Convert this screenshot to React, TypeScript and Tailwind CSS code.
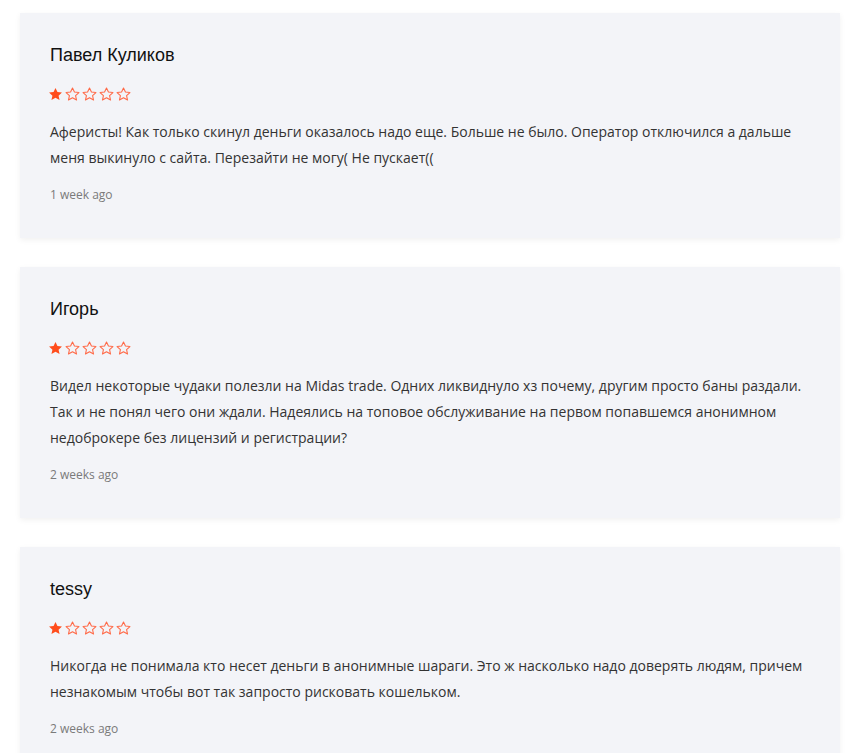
import React from "react";

type Review = {
  name: string;
  rating: number;
  text: string;
  date: string;
};

const reviews: Review[] = [
  {
    name: "Павел Куликов",
    rating: 1,
    text: "Аферисты! Как только скинул деньги оказалось надо еще. Больше не было. Оператор отключился а дальше меня выкинуло с сайта. Перезайти не могу( Не пускает((",
    date: "1 week ago",
  },
  {
    name: "Игорь",
    rating: 1,
    text: "Видел некоторые чудаки полезли на Midas trade. Одних ликвиднуло хз почему, другим просто баны раздали. Так и не понял чего они ждали. Надеялись на топовое обслуживание на первом попавшемся анонимном недоброкере без лицензий и регистрации?",
    date: "2 weeks ago",
  },
  {
    name: "tessy",
    rating: 1,
    text: "Никогда не понимала кто несет деньги в анонимные шараги. Это ж насколько надо доверять людям, причем незнакомым чтобы вот так запросто рисковать кошельком.",
    date: "2 weeks ago",
  },
];

const STAR =
  "M12 1.5l3.1 6.6 7.2.8-5.4 4.9 1.6 7.1L12 17.2l-6.5 3.7 1.6-7.1-5.4-4.9 7.2-.8z";

const Star = ({ filled }: { filled: boolean }) => (
  <svg width="15" height="15" viewBox="0 0 24 24">
    {filled ? (
      <path d={STAR} fill="#ff4d1c" />
    ) : (
      <path d={STAR} fill="none" stroke="#ff6a48" strokeWidth="1.7" strokeLinejoin="round" />
    )}
  </svg>
);

const ReviewCard = ({ review }: { review: Review }) => (
  <div className="bg-[#f3f4f8] shadow-[0_2px_6px_rgba(0,0,0,0.06)] px-[30px] pt-[30px] pb-[34px]">
    <div className="text-[18px] leading-[24px] text-[#111] font-['Liberation_Sans',Arial,sans-serif]">
      {review.name}
    </div>
    <div className="mt-5 -ml-[2px] flex h-[14px] items-center gap-[2px]">
      {[1, 2, 3, 4, 5].map((i) => (
        <Star key={i} filled={i <= review.rating} />
      ))}
    </div>
    <p className="mt-[18px] text-[14px] leading-[26px] text-[#333]">{review.text}</p>
    <div className="mt-[15px] text-[12px] leading-[18px] text-[#7a7a7a]">{review.date}</div>
  </div>
);

export default function App() {
  return (
    <div className="h-screen overflow-hidden bg-white pl-5 pr-[10px] pt-[13px] font-['Open_Sans',sans-serif]">
      <div className="flex flex-col gap-[29px]">
        {reviews.map((r) => (
          <ReviewCard key={r.name} review={r} />
        ))}
      </div>
    </div>
  );
}
